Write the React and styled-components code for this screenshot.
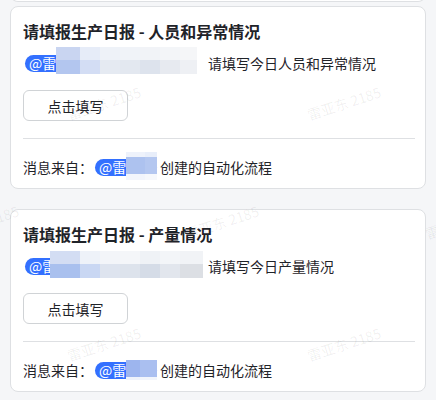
import styled, { createGlobalStyle } from "styled-components";

const GlobalStyle = createGlobalStyle`
  html, body {
    margin: 0;
    padding: 0;
    background: #f5f6f8;
  }
  body {
    font-family: "Noto Sans CJK SC", "Noto Sans", sans-serif;
    color: #1f2329;
  }
`;

const cards = [
  {
    title: "请填报生产日报 - 人员和异常情况",
    task: "请填写今日人员和异常情况",
    rowMosaic: {
      left: 31,
      top: -3,
      cols: [24, 20, 20, 20, 20, 20, 17],
      rows: [13, 14],
      colors: [
        ["#c9d5f1", "#e6ecf8", "#eef2f8", "#f0f3f8", "#f1f3f7", "#f3f5f8", "#f5f6f8"],
        ["#b3c6ef", "#d3ddf4", "#e5eaf2", "#e3e8f0", "#dde3ed", "#e7eaf0", "#eef0f4"],
      ],
    },
    footMosaic: {
      left: 31,
      top: -3,
      cols: [19, 12],
      rows: [5, 17, 6],
      colors: [
        ["#eef2fb", "#e8eefa"],
        ["#adc2ef", "#b4c7f0"],
        ["#f2f5fc", "#f6f8fc"],
      ],
    },
  },
  {
    title: "请填报生产日报 - 产量情况",
    task: "请填写今日产量情况",
    rowMosaic: {
      left: 25,
      top: -2,
      cols: [30, 20, 20, 20, 20, 20, 23],
      rows: [13, 14],
      colors: [
        ["#d3ddf3", "#eef2f9", "#f3f5f9", "#f4f6f9", "#eff2f6", "#f3f5f8", "#f1f3f6"],
        ["#a9c0ee", "#c9d7f3", "#dee4ef", "#dde3ec", "#d5dce7", "#e2e6ed", "#dcdfe4"],
      ],
    },
    footMosaic: {
      left: 31,
      top: 2,
      cols: [14, 17],
      rows: [17, 3],
      colors: [
        ["#9db5ee", "#aabff0"],
        ["#eef2fb", "#f2f5fc"],
      ],
    },
  },
];

const marks = [
  { x: 104, y: 103 },
  { x: 344, y: 103 },
  { x: -18, y: 222 },
  { x: 222, y: 222 },
  { x: 462, y: 222 },
  { x: 104, y: 344 },
  { x: 344, y: 344 },
];

export default function App() {
  return (
    <>
      <GlobalStyle />
      <Page>
        <PrevTail />
        {cards.map((c, i) => (
          <Card key={i}>
            <Title>{c.title}</Title>
            <TaskRow>
              <Mention $w={183}>
                <Pill $w={44}>@雷</Pill>
                <Mosaic data={c.rowMosaic} />
              </Mention>
              <span>{c.task}</span>
            </TaskRow>
            <FillButton>点击填写</FillButton>
            <Divider />
            <Footer>
              <span>消息来自：</span>
              <Mention $w={65}>
                <Pill $w={62}>@雷</Pill>
                <Mosaic data={c.footMosaic} />
              </Mention>
              <span>创建的自动化流程</span>
            </Footer>
          </Card>
        ))}
        <Watermarks>
          {marks.map((m, i) => (
            <Mark key={i} $x={m.x} $y={m.y}>
              雷亚东 2185
            </Mark>
          ))}
        </Watermarks>
      </Page>
    </>
  );
}

function Mosaic({ data }) {
  return (
    <MosaicGrid
      $left={data.left}
      $top={data.top}
      $cols={data.cols.map((w) => w + "px").join(" ")}
      $rows={data.rows.map((h) => h + "px").join(" ")}
    >
      {data.colors.flat().map((col, i) => (
        <Cell key={i} $c={col} />
      ))}
    </MosaicGrid>
  );
}

const Page = styled.div`
  position: relative;
  width: 436px;
  height: 400px;
  overflow: hidden;
  display: flex;
  flex-direction: column;
`;

const PrevTail = styled.div`
  box-sizing: border-box;
  flex-shrink: 0;
  width: 416px;
  height: 10px;
  margin: -8px 10px 0;
  background: #fff;
  border: 1px solid #dee0e3;
  border-top: none;
  border-radius: 0 0 8px 8px;
`;

const Card = styled.div`
  box-sizing: border-box;
  flex-shrink: 0;
  width: 416px;
  height: 183px;
  margin: 4px 10px 16px;
  padding: 13px 10px 0 12px;
  background: #fff;
  border: 1px solid #dee0e3;
  border-radius: 8px;
  display: flex;
  flex-direction: column;
  align-items: flex-start;
`;

const Title = styled.div`
  font-size: 16px;
  line-height: 22px;
  font-weight: 600;
  color: #1f2329;
`;

const TaskRow = styled.div`
  margin-top: 8px;
  height: 26px;
  display: flex;
  align-items: center;
  font-size: 14px;
  color: #1f2329;
`;

const Footer = styled.div`
  margin-top: 16px;
  height: 24px;
  display: flex;
  align-items: center;
  font-size: 14px;
  color: #1f2329;
`;

const Mention = styled.span`
  position: relative;
  display: inline-flex;
  align-items: center;
  align-self: stretch;
  width: ${(p) => p.$w}px;
  margin-left: 2px;
`;

const Pill = styled.span`
  box-sizing: border-box;
  width: ${(p) => p.$w}px;
  height: 17px;
  padding: 0 4px;
  border-radius: 9px;
  background: #3370ff;
  color: #fff;
  font-size: 14px;
  line-height: 17px;
  white-space: nowrap;
  overflow: hidden;
`;

const MosaicGrid = styled.span`
  position: absolute;
  left: ${(p) => p.$left}px;
  top: ${(p) => p.$top}px;
  display: grid;
  grid-template-columns: ${(p) => p.$cols};
  grid-template-rows: ${(p) => p.$rows};
`;

const Cell = styled.span`
  background: ${(p) => p.$c};
`;

const FillButton = styled.button`
  box-sizing: border-box;
  margin-top: 14px;
  width: 105px;
  height: 31px;
  padding: 0;
  background: #fff;
  border: 1px solid #d0d3d6;
  border-radius: 6px;
  font-family: inherit;
  font-size: 14px;
  color: #1f2329;
  cursor: pointer;
`;

const Divider = styled.div`
  align-self: stretch;
  margin-top: 17px;
  height: 1px;
  background: #dee0e3;
`;

const Watermarks = styled.div`
  position: absolute;
  inset: 0;
  pointer-events: none;
`;

const Mark = styled.span`
  position: absolute;
  left: ${(p) => p.$x}px;
  top: ${(p) => p.$y}px;
  transform: translate(-50%, -50%) rotate(-18deg);
  font-size: 14px;
  white-space: nowrap;
  color: rgba(31, 35, 41, 0.07);
`;
